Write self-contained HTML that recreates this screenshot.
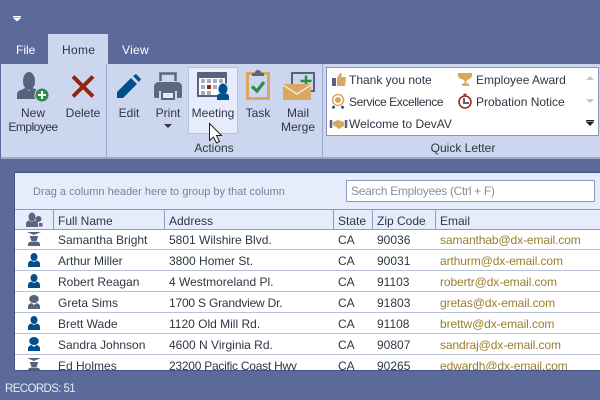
<!DOCTYPE html>
<html><head><meta charset="utf-8"><style>
*{box-sizing:border-box;margin:0;padding:0}
html,body{width:600px;height:400px;overflow:hidden;background:#5b6a98}
body{position:relative;font:12px/16px "Liberation Sans",sans-serif;color:#2f3544}
.a{position:absolute}
.t{position:absolute;white-space:nowrap;height:16px;line-height:16px}
.c{transform:translateX(-50%)}
.w{color:#fff}
.row{position:absolute;left:15px;width:585px;height:21px;background:#fff;border-bottom:1px solid #b9c1da}
.row span{position:absolute;top:3px;line-height:16px;white-space:nowrap;color:#2f3544}
.row .n{left:43px}.row .d{left:154px}.row .s{left:323px}.row .z{left:362px}
.row .e{left:425px;color:#9a7d2c;letter-spacing:-.1px}
.vs{position:absolute;top:209px;width:1px;height:21px;background:#8f9dc4}
svg{position:absolute;left:0;top:0}
</style></head><body>
<div class="a" style="left:48px;top:34px;width:60px;height:31px;background:#ccd6ee"></div>
<div class="a" style="left:1px;top:64px;width:599px;height:95px;background:#ccd6ee;border-bottom:2px solid #9ba9cd"></div>
<div class="a" style="left:106px;top:64px;width:1px;height:93px;background:#9ba9cd"></div>
<div class="a" style="left:322px;top:64px;width:1px;height:93px;background:#9ba9cd"></div>
<div class="a" style="left:188px;top:67px;width:50px;height:67px;background:#e6ecfc;border:1px solid #b4c3e2"></div>
<div class="a" style="left:326px;top:67px;width:273px;height:69px;background:#fff;border:1px solid #8795bd"></div>
<div class="t w" style="left:16px;top:42px">File</div>
<div class="t" style="left:62px;top:42px;letter-spacing:.3px">Home</div>
<div class="t w" style="left:122px;top:42px;letter-spacing:.3px">View</div>
<div class="t c" style="left:33px;top:105px">New</div>
<div class="t c" style="left:33px;top:119px;letter-spacing:-.5px">Employee</div>
<div class="t c" style="left:83px;top:105px">Delete</div>
<div class="t c" style="left:129px;top:105px">Edit</div>
<div class="t c" style="left:168px;top:105px">Print</div>
<div class="t c" style="left:213px;top:105px">Meeting</div>
<div class="t c" style="left:258px;top:105px">Task</div>
<div class="t c" style="left:298px;top:105px">Mail</div>
<div class="t c" style="left:298px;top:119px">Merge</div>
<div class="t c" style="left:214px;top:140px">Actions</div>
<div class="t c" style="left:463px;top:140px">Quick Letter</div>
<div class="t" style="left:349px;top:72px">Thank you note</div>
<div class="t" style="left:476px;top:72px">Employee Award</div>
<div class="t" style="left:349px;top:94px;letter-spacing:-.4px">Service Excellence</div>
<div class="t" style="left:476px;top:94px">Probation Notice</div>
<div class="t" style="left:349px;top:116px">Welcome to DevAV</div>
<div class="a" style="left:14px;top:172px;width:586px;height:199px;background:#e6ecfc;border:1px solid #44548a;border-right:0"></div>
<div class="t" style="left:33px;top:184px;font-size:11px;color:#7c8296">Drag a column header here to group by that column</div>
<div class="a" style="left:346px;top:180px;width:249px;height:22px;background:#fff;border:1px solid #8d9bc2"></div>
<div class="t" style="left:351px;top:183px;color:#8a8f9e;letter-spacing:-.3px">Search Employees (Ctrl + F)</div>
<div class="a" style="left:15px;top:209px;width:585px;height:1px;background:#8f9dc4"></div>
<div class="a" style="left:15px;top:229px;width:585px;height:1px;background:#8f9dc4"></div>
<div class="vs" style="left:53px"></div><div class="vs" style="left:164px"></div><div class="vs" style="left:333px"></div><div class="vs" style="left:372px"></div><div class="vs" style="left:435px"></div>
<div class="t" style="left:58px;top:213px">Full Name</div>
<div class="t" style="left:169px;top:213px">Address</div>
<div class="t" style="left:338px;top:213px">State</div>
<div class="t" style="left:377px;top:213px">Zip Code</div>
<div class="t" style="left:440px;top:213px">Email</div>
<div class="row" style="top:230px;height:20px"><span class="n" style="top:2px">Samantha Bright</span><span class="d" style="top:2px">5801 Wilshire Blvd.</span><span class="s" style="top:2px">CA</span><span class="z" style="top:2px">90036</span><span class="e" style="top:2px">samanthab@dx-email.com</span></div>
<div class="row" style="top:250px"><span class="n">Arthur Miller</span><span class="d">3800 Homer St.</span><span class="s">CA</span><span class="z">90031</span><span class="e">arthurm@dx-email.com</span></div>
<div class="row" style="top:271px"><span class="n">Robert Reagan</span><span class="d">4 Westmoreland Pl.</span><span class="s">CA</span><span class="z">91103</span><span class="e">robertr@dx-email.com</span></div>
<div class="row" style="top:292px"><span class="n">Greta Sims</span><span class="d" style="letter-spacing:-.2px">1700 S Grandview Dr.</span><span class="s">CA</span><span class="z">91803</span><span class="e">gretas@dx-email.com</span></div>
<div class="row" style="top:313px"><span class="n">Brett Wade</span><span class="d">1120 Old Mill Rd.</span><span class="s">CA</span><span class="z">91108</span><span class="e">brettw@dx-email.com</span></div>
<div class="row" style="top:334px"><span class="n">Sandra Johnson</span><span class="d">4600 N Virginia Rd.</span><span class="s">CA</span><span class="z">90807</span><span class="e">sandraj@dx-email.com</span></div>
<div class="row" style="top:355px;height:15px;border:0;overflow:hidden"><span class="n">Ed Holmes</span><span class="d" style="letter-spacing:-.25px">23200 Pacific Coast Hwy</span><span class="s">CA</span><span class="z">90265</span><span class="e">edwardh@dx-email.com</span></div>
<div class="t" style="left:5px;top:381px;color:#e8ecf6;font-size:11.5px;letter-spacing:-.6px">RECORDS: 51</div>
<svg width="600" height="400" viewBox="0 0 600 400">
<defs>
<g id="man"><ellipse cx="34" cy="0" rx="3.500" ry="4"/><path d="M28 10V7q0-2.500 3-3.500l3 1.500 3-1.500q3 1 3 3.500v3z"/></g>
<g id="woman"><ellipse cx="34" cy="0" rx="4.800" ry="4"/><path d="M28 10V7.500q0-2.500 3.500-3.500l2.500 2 2.500-2q3.500 1 3.500 3.500V10z"/></g>
<g id="grad"><path d="M27-3h14l-7 3z"/><path d="M30 1h8v1l-1.500 4h-5L30 2z"/><path d="M28 11V9q0-2 3.500-2.500h5Q40 7 40 9v2z"/></g>
</defs>
<path d="M13 16h8v1.500h-8zM13 18h8l-4 3.500z" fill="#fff"/>
<g fill="#57627f"><ellipse cx="29" cy="81" rx="6" ry="9"/><path d="M17 99v-5q0-3 4-4l4-2 4 3 4-3 4 2q3 1 3 4v5z"/></g>
<circle cx="42" cy="95" r="7" fill="#2e8b4a" stroke="#ccd6ee"/><path d="M42 91v8M38 95h8" stroke="#fff" stroke-width="2"/>
<path d="M73 76.500l20 20M93 76.500l-20 20" stroke="#93230f" stroke-width="4"/>
<path d="M117 98v-6l14-14 6 6-14 14zM133 76l3-2 5 5-2 3z" fill="#004e8c"/>
<path d="M160.500 81v-7.500h15V81" fill="none" stroke="#5a6780" stroke-width="2.500"/>
<path d="M154 87q0-5 5-5h18q5 0 5 5v9q0 2-2 2h-3v-7h-18v7h-3q-2 0-2-2z" fill="#5a6780"/>
<path d="M162 92h12v7h-12z" fill="#e4e9f6" stroke="#5a6780" stroke-width="2"/>
<rect x="197" y="72" width="30" height="25" fill="#57627f"/><rect x="199" y="78" width="26" height="17" fill="#fff"/>
<g fill="#a9aebb"><rect x="201" y="79" width="4" height="4"/><rect x="207" y="79" width="4" height="4"/><rect x="213" y="79" width="4" height="4"/><rect x="219" y="79" width="4" height="4"/><rect x="201" y="85" width="4" height="4"/><rect x="213" y="85" width="4" height="4"/><rect x="201" y="91" width="4" height="4"/><rect x="207" y="91" width="4" height="4"/></g>
<rect x="207" y="85" width="4" height="4" fill="#93230f"/>
<ellipse cx="223" cy="89" rx="5" ry="6" fill="#004e8c" stroke="#e6ecfc"/><path d="M217 100v-3q0-3 3-3.500l3 1 3-1q3 .5 3 3.500v3z" fill="#004e8c"/>
<rect x="247.500" y="73.500" width="21" height="25" fill="none" stroke="#d8a860" stroke-width="3"/>
<path d="M252 76v-3h3q0-3 3-3t3 3h3v3z" fill="#5a6780"/>
<path d="M252 86.500l5 4.500 7-9" fill="none" stroke="#2e8b4a" stroke-width="3.200"/>
<path d="M292 84V73h22v18h-8" fill="none" stroke="#57627f" stroke-width="2"/>
<path d="M306 75.500v11M300.500 81h11" stroke="#2e8b4a" stroke-width="2.500"/>
<path d="M283 84h28v16h-28z" fill="#d8a860"/><path d="M283 85l14 9 14-9" fill="none" stroke="#f3e6cf" stroke-width="1.500"/>
<path d="M164 124h8l-4 4z" fill="#2f3544"/>
<path d="M209.500 123.500v17l4-3.500 3 6 3-1.500-3-6h5z" fill="#fff" stroke="#222" stroke-width="1"/>
<rect x="332" y="78" width="4" height="8" fill="#57627f"/><path d="M337 78l3-5 2 1-1 3h5l-1 9h-8z" fill="#d8a860"/>
<circle cx="338" cy="100" r="5.500" fill="none" stroke="#d8a860" stroke-width="1.500"/><circle cx="338" cy="100" r="3" fill="#d8a860"/><path d="M334 106l-1 2.500M342 106l1 2.500" stroke="#004e8c" stroke-width="2.500"/>
<path d="M331 120v8M346 120v8" stroke="#57627f" stroke-width="2.500"/><path d="M333 122l5-2 3 1 3 1v4l-5 3-6-4z" fill="#d8a860"/>
<path d="M458 73h14v2.500q0 3-4 4l-1.500 1.500v2.500h2.500v2.500h-7v-2.500h2.500V81l-1.500-1.500q-5-1-5-4z" fill="#d8a860"/>
<circle cx="465" cy="102" r="6" fill="#fff" stroke="#93230f" stroke-width="1.500"/><path d="M463.500 94.500h3" stroke="#93230f" stroke-width="1.500"/><path d="M465 98v4h4v2h-6v-6z" fill="#57627f"/>
<path d="M586 80l4-4 4 4z" fill="#c3c7cf"/><path d="M586 99h8l-4 4z" fill="#c3c7cf"/>
<path d="M586 120h8v1.500h-8zM586 122h8l-4 4z" fill="#222"/>
<g fill="#5a6780"><ellipse cx="32" cy="217" rx="3.500" ry="4.500"/><path d="M26 227v-3q0-3 3-3.500l3 1.500 3-1.500q3 .5 3 3.500v3z"/><circle cx="38.500" cy="219" r="3"/><path d="M39 223h3.500v3.500h-3.500z"/></g>
<use href="#grad" y="235" fill="#57627f"/>
<use href="#man" y="257" fill="#004e8c"/>
<use href="#man" y="278" fill="#004e8c"/>
<use href="#woman" y="299" fill="#57627f"/>
<use href="#man" y="320" fill="#004e8c"/>
<use href="#woman" y="341" fill="#004e8c"/>
<svg x="15" y="355" width="60" height="15" viewBox="15 355 60 15" overflow="hidden" style="position:static"><use href="#grad" y="361" fill="#57627f"/></svg>
</svg>
</body></html>
